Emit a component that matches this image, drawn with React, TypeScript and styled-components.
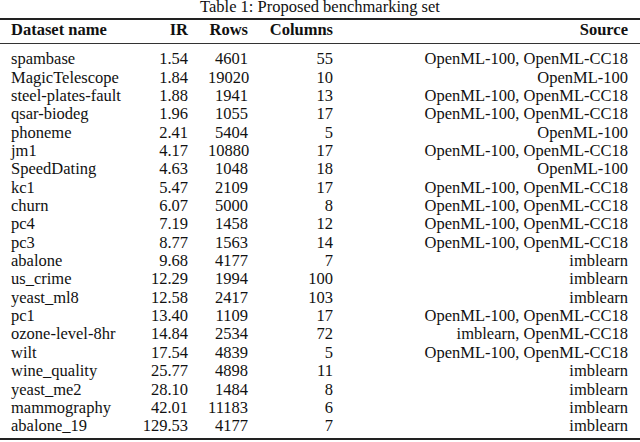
import React from 'react'
import styled, { createGlobalStyle } from 'styled-components'

const GlobalStyle = createGlobalStyle`
  html, body {
    margin: 0;
    padding: 0;
    background: #ffffff;
  }
  body {
    font-family: 'Liberation Serif', 'Times New Roman', serif;
    font-size: 16.5px;
    color: #111111;
  }
`

const Figure = styled.div`
  width: 640px;
  height: 442px;
  overflow: hidden;
`

const Caption = styled.div`
  text-align: center;
  line-height: 14px;
  height: 14px;
  margin-bottom: 4px;
`

const Table = styled.table`
  width: 640px;
  border-collapse: collapse;
  table-layout: fixed;
  line-height: 18.35px;
`

type CellProps = { $align?: 'left' | 'right'; $edge?: 'first' | 'last' }

const HeadCell = styled.th<CellProps>`
  font-weight: bold;
  text-align: ${(p) => p.$align || 'right'};
  padding: 1.3px ${(p) => (p.$edge === 'last' ? '12px' : '10px')} 3.4px
    ${(p) => (p.$edge === 'first' ? '11px' : '10px')};
  border-top: 2px solid #222;
  border-bottom: 1px solid #333;
  white-space: nowrap;
`

const Cell = styled.td<CellProps>`
  text-align: ${(p) => p.$align || 'right'};
  padding: 0 ${(p) => (p.$edge === 'last' ? '12px' : '10px')} 0
    ${(p) => (p.$edge === 'first' ? '11px' : '10px')};
  white-space: nowrap;
`

const BodyRow = styled.tr<{ $first?: boolean; $last?: boolean }>`
  td {
    padding-top: ${(p) => (p.$first ? '6.3px' : '0')};
    padding-bottom: ${(p) => (p.$last ? '2.4px' : '0')};
    border-bottom: ${(p) => (p.$last ? '2px solid #222' : 'none')};
  }
`

type Row = [string, string, string, string, string]

const rows: Row[] = [
  ['spambase', '1.54', '4601', '55', 'OpenML-100, OpenML-CC18'],
  ['MagicTelescope', '1.84', '19020', '10', 'OpenML-100'],
  ['steel-plates-fault', '1.88', '1941', '13', 'OpenML-100, OpenML-CC18'],
  ['qsar-biodeg', '1.96', '1055', '17', 'OpenML-100, OpenML-CC18'],
  ['phoneme', '2.41', '5404', '5', 'OpenML-100'],
  ['jm1', '4.17', '10880', '17', 'OpenML-100, OpenML-CC18'],
  ['SpeedDating', '4.63', '1048', '18', 'OpenML-100'],
  ['kc1', '5.47', '2109', '17', 'OpenML-100, OpenML-CC18'],
  ['churn', '6.07', '5000', '8', 'OpenML-100, OpenML-CC18'],
  ['pc4', '7.19', '1458', '12', 'OpenML-100, OpenML-CC18'],
  ['pc3', '8.77', '1563', '14', 'OpenML-100, OpenML-CC18'],
  ['abalone', '9.68', '4177', '7', 'imblearn'],
  ['us_crime', '12.29', '1994', '100', 'imblearn'],
  ['yeast_ml8', '12.58', '2417', '103', 'imblearn'],
  ['pc1', '13.40', '1109', '17', 'OpenML-100, OpenML-CC18'],
  ['ozone-level-8hr', '14.84', '2534', '72', 'imblearn, OpenML-CC18'],
  ['wilt', '17.54', '4839', '5', 'OpenML-100, OpenML-CC18'],
  ['wine_quality', '25.77', '4898', '11', 'imblearn'],
  ['yeast_me2', '28.10', '1484', '8', 'imblearn'],
  ['mammography', '42.01', '11183', '6', 'imblearn'],
  ['abalone_19', '129.53', '4177', '7', 'imblearn'],
]

export default function App() {
  return (
    <Figure>
      <GlobalStyle />
      <Caption>Table 1: Proposed benchmarking set</Caption>
      <Table>
        <colgroup>
          <col style={{ width: 130 }} />
          <col style={{ width: 68 }} />
          <col style={{ width: 60 }} />
          <col style={{ width: 85 }} />
          <col style={{ width: 297 }} />
        </colgroup>
        <thead>
          <tr>
            <HeadCell $align="left" $edge="first">
              Dataset name
            </HeadCell>
            <HeadCell>IR</HeadCell>
            <HeadCell>Rows</HeadCell>
            <HeadCell>Columns</HeadCell>
            <HeadCell $edge="last">Source</HeadCell>
          </tr>
        </thead>
        <tbody>
          {rows.map(([name, ir, n, cols, source], i) => (
            <BodyRow key={name} $first={i === 0} $last={i === rows.length - 1}>
              <Cell $align="left" $edge="first">
                {name}
              </Cell>
              <Cell>{ir}</Cell>
              <Cell>{n}</Cell>
              <Cell>{cols}</Cell>
              <Cell $edge="last">{source}</Cell>
            </BodyRow>
          ))}
        </tbody>
      </Table>
    </Figure>
  )
}
